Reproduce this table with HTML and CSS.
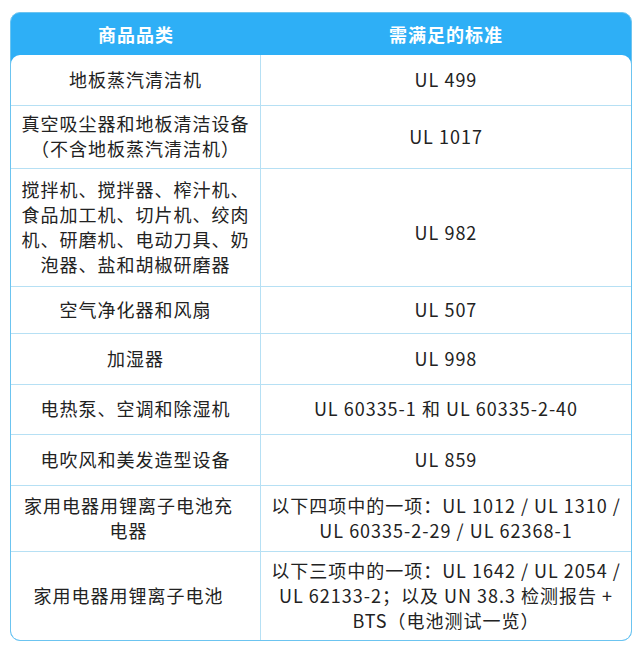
FILE: index.html
```html
<!DOCTYPE html>
<html lang="zh-CN">
<head>
<meta charset="utf-8">
<title>UL 标准</title>
<link rel="stylesheet" href="styles.css">
</head>
<body>
<div class="table">
  <div class="head">
    <div class="hcell">商品品类</div>
    <div class="hcell">需满足的标准</div>
  </div>
  <div class="body">
    <div class="cell l">地板蒸汽清洁机</div>
    <div class="cell r">UL 499</div>

    <div class="cell l">真空吸尘器和地板清洁设备<br>（不含地板蒸汽清洁机）</div>
    <div class="cell r">UL 1017</div>

    <div class="cell l">搅拌机、搅拌器、榨汁机、<br>食品加工机、切片机、绞肉<br>机、研磨机、电动刀具、奶<br>泡器、盐和胡椒研磨器</div>
    <div class="cell r low">UL 982</div>

    <div class="cell l">空气净化器和风扇</div>
    <div class="cell r">UL 507</div>

    <div class="cell l">加湿器</div>
    <div class="cell r">UL 998</div>

    <div class="cell l">电热泵、空调和除湿机</div>
    <div class="cell r">UL 60335-1 和 UL 60335-2-40</div>

    <div class="cell l">电吹风和美发造型设备</div>
    <div class="cell r">UL 859</div>

    <div class="cell l shift">家用电器用锂离子电池充<br>电器</div>
    <div class="cell r">以下四项中的一项：UL 1012 / UL 1310 /<br>UL 60335-2-29 / UL 62368-1</div>

    <div class="cell l shift last">家用电器用锂离子电池</div>
    <div class="cell r last">以下三项中的一项：UL 1642 / UL 2054 /<br>UL 62133-2；以及 UN 38.3 检测报告 +<br>BTS（电池测试一览）</div>
  </div>
</div>
</body>
</html>
```

FILE: styles.css
```css
html, body {
  background: #ffffff;
}
body {
  margin: 12px 10px;
  font-family: "Noto Sans CJK SC", "Noto Sans", sans-serif;
  color: #222222;
}
.table {
  border: 1px solid #6cc4f0;
  border-radius: 10px;
  background: #2eaff6;
  overflow: hidden;
}
.head {
  display: grid;
  grid-template-columns: 250px 1fr;
  height: 42px;
  align-items: center;
}
.hcell {
  text-align: center;
  color: #ffffff;
  font-weight: 700;
  font-size: 18px;
  letter-spacing: 1px;
  line-height: 24px;
}
.body {
  background: #ffffff;
  border-radius: 9px 9px 0 0;
  display: grid;
  grid-template-columns: 250px 1fr;
  grid-template-rows: 51px 63px 118px 47px 51px 50px 51px 66px 88px;
}
.cell {
  display: flex;
  align-items: center;
  justify-content: center;
  text-align: center;
  font-size: 18px;
  letter-spacing: 1px;
  line-height: 25px;
  border-bottom: 1px solid #b6e0f4;
  padding: 0 6px 2px;
}
.cell.l {
  border-right: 1px solid #b6e0f4;
}
.cell.shift {
  padding-right: 20px;
}
.cell.low {
  padding-top: 12px;
}
.cell.last {
  border-bottom: none;
}
```
